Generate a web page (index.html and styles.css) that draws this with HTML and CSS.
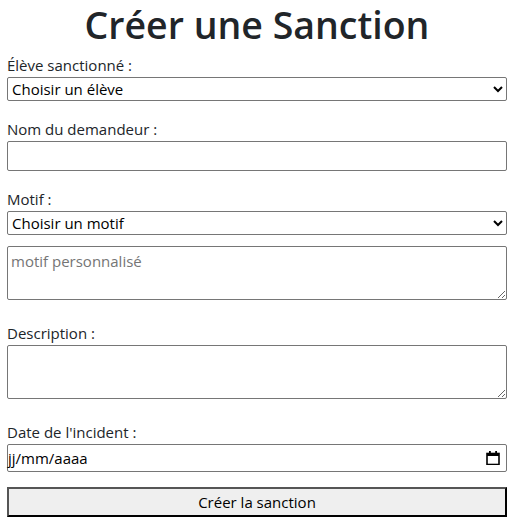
FILE: index.html
```html
<!DOCTYPE html>
<html lang="fr">
<head>
<meta charset="utf-8">
<title>Créer une Sanction</title>
<link rel="stylesheet" href="styles.css">
</head>
<body>
<div class="page">
  <h1 class="title">Créer une Sanction</h1>
  <form class="form">
    <div class="group g-eleve">
      <label class="lbl" for="eleve">Élève sanctionné :</label>
      <select id="eleve" class="ctl sel"><option>Choisir un élève</option></select>
    </div>
    <div class="group g-nom">
      <label class="lbl" for="nom">Nom du demandeur :</label>
      <input id="nom" class="ctl txt" type="text">
    </div>
    <div class="group g-motif">
      <label class="lbl" for="motif">Motif :</label>
      <select id="motif" class="ctl sel"><option>Choisir un motif</option></select>
      <textarea class="ctl area area-motif" placeholder="motif personnalisé"></textarea>
    </div>
    <div class="group g-desc">
      <label class="lbl" for="desc">Description :</label>
      <textarea id="desc" class="ctl area"></textarea>
    </div>
    <div class="group g-date">
      <label class="lbl" for="date">Date de l'incident :</label>
      <div class="ctl datebox" id="date">
        <span class="date-ph">jj/mm/aaaa</span>
        <svg class="cal" width="14" height="14" viewBox="0 0 14 14" aria-hidden="true">
          <rect x="1" y="2.5" width="12" height="11" fill="none" stroke="#000" stroke-width="1.6"/>
          <rect x="1" y="2" width="12" height="3" fill="#000"/>
          <rect x="3" y="0" width="1.8" height="3" fill="#000"/>
          <rect x="9.2" y="0" width="1.8" height="3" fill="#000"/>
        </svg>
      </div>
    </div>
    <button type="button" class="submit">Créer la sanction</button>
  </form>
</div>
</body>
</html>
```
FILE: styles.css
```css
html, body {
  margin: 0;
  padding: 0;
  background: #fff;
}
body {
  font-family: "Open Sans", "Noto Sans", sans-serif;
  font-size: 15px;
  line-height: 1.6;
  color: #212529;
}
.page {
  width: 500px;
  padding: 0 10px 0 7px;
}
.title {
  margin: 0;
  font-size: 37.5px;
  font-weight: 600;
  line-height: 50px;
  text-align: center;
  height: 53px;
}
.form {
  display: flex;
  flex-direction: column;
}
.group {
  display: flex;
  flex-direction: column;
}
.lbl {
  display: block;
  height: 24px;
  line-height: 24px;
}
.ctl {
  box-sizing: border-box;
  width: 500px;
  margin: 0;
  font-family: inherit;
  font-size: 15px;
  color: #000;
  border: 1px solid #767676;
  border-radius: 2px;
  background: #fff;
}
.sel {
  height: 24px;
  padding: 0;
  line-height: 22px;
}
.txt {
  height: 30px;
}
.area {
  height: 54px;
  padding: 2px 3px;
  resize: vertical;
  line-height: 24px;
}
.area::placeholder {
  color: #757575;
}
.g-nom { margin-top: 16px; }
.g-motif { margin-top: 16px; }
.area-motif { margin-top: 11px; }
.g-desc { margin-top: 21px; }
.g-date { margin-top: 21px; }
.datebox {
  height: 28px;
  display: flex;
  align-items: center;
  justify-content: space-between;
  padding: 0 6px 0 0;
}
.date-ph {
  line-height: 26px;
}
.cal {
  display: block;
}
.submit {
  box-sizing: border-box;
  width: 500px;
  height: 30px;
  margin-top: 15px;
  font-family: inherit;
  font-size: 15px;
  color: #000;
  background: #efefef;
  border-style: solid;
  border-width: 2px;
  border-color: #555 #000 #000 #555;
  padding: 0;
}
```
